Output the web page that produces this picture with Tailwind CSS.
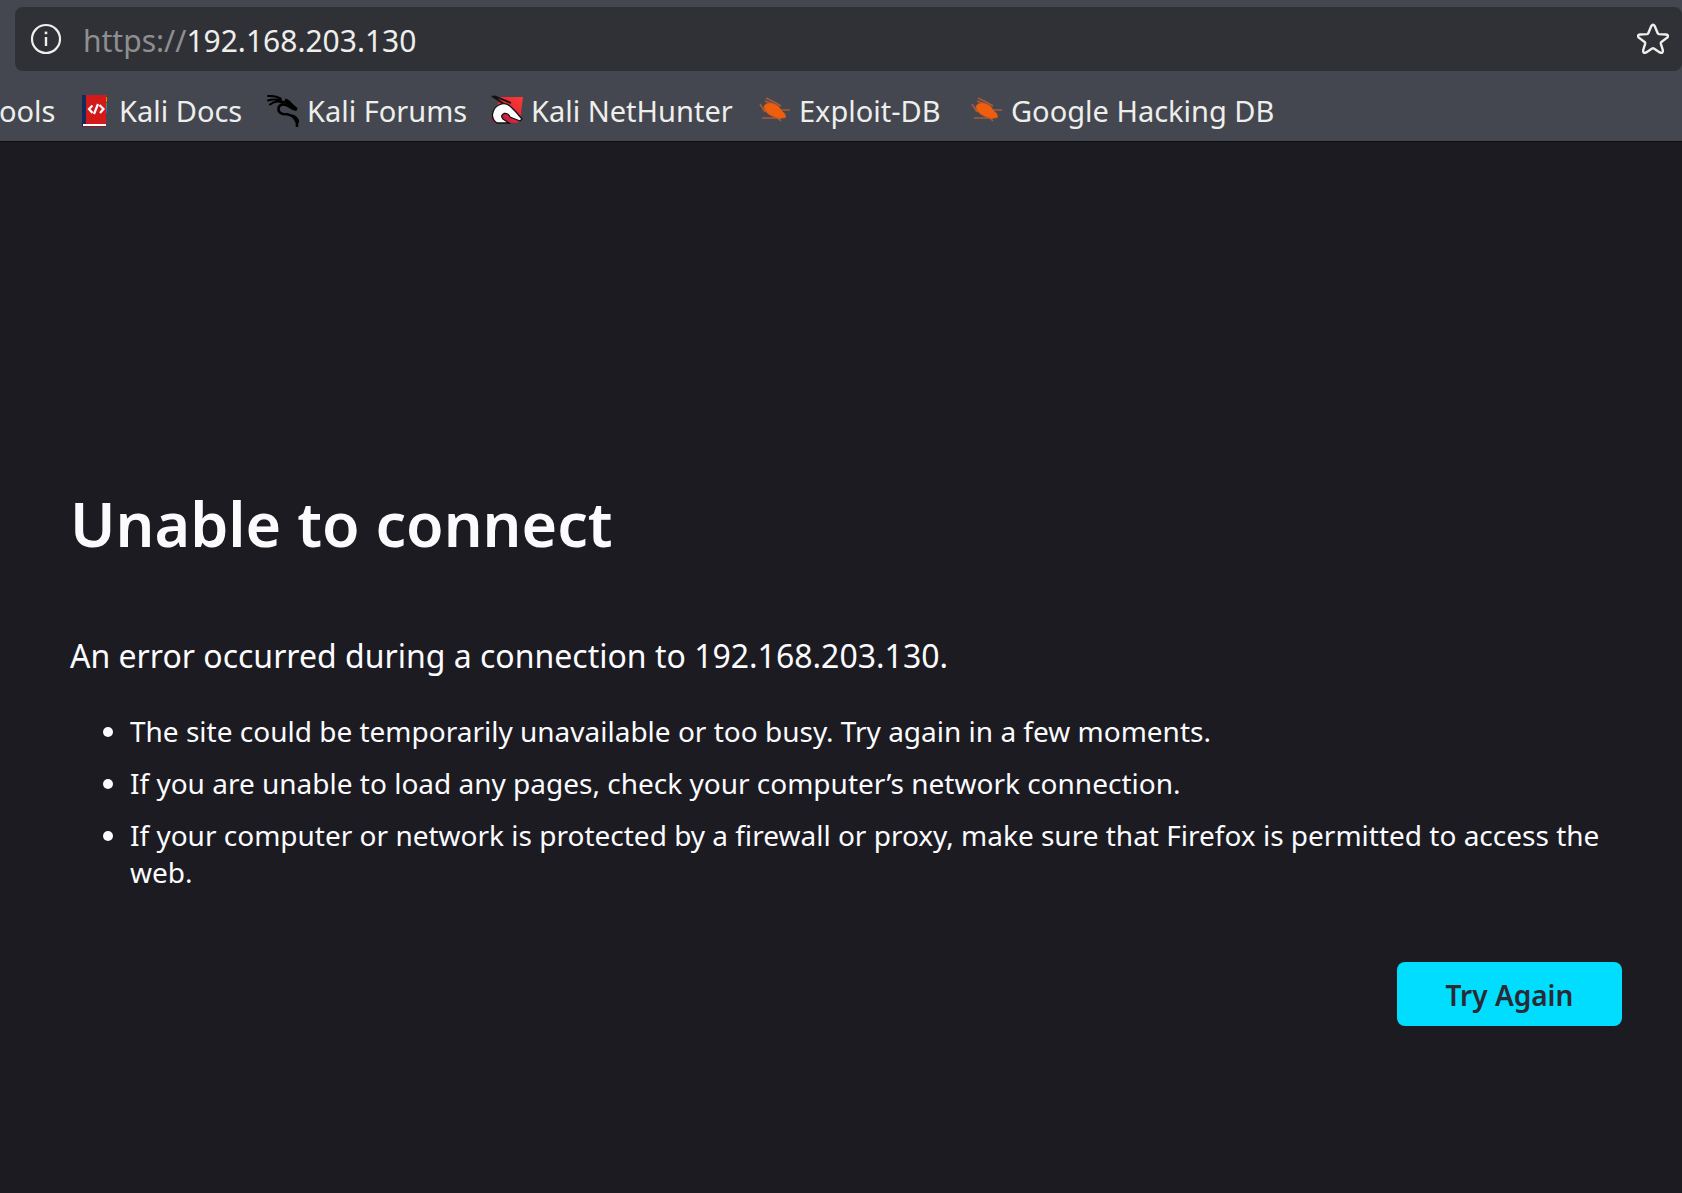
<!DOCTYPE html>
<html lang="en">
<head>
<meta charset="utf-8">
<meta name="viewport" content="width=device-width, initial-scale=1">
<title>Problem loading page</title>
<script src="https://cdn.jsdelivr.net/npm/@tailwindcss/browser@4"></script>
</head>
<body class="min-h-screen bg-[#1c1b22] font-['Noto_Sans',sans-serif] text-[#fbfbfe]">

<header class="border-b border-[#0c0c0d] bg-[#44474f] pt-[7px] text-[#eeeeec]">
  <div class="ml-[15px] flex h-16 items-center rounded-lg bg-[#303136] pr-[13px] pl-[15px]">
    <button type="button" aria-label="Site information" class="shrink-0">
      <svg class="size-8" viewBox="0 0 32 32" fill="none" stroke="currentColor">
        <circle cx="16" cy="16" r="14" stroke-width="2.2"/>
        <path d="M16 14v9" stroke-width="2.4"/>
        <path d="M16 8.6v2.6" stroke-width="2.6"/>
      </svg>
    </button>
    <div class="ml-[21px] flex flex-1 pt-[3px] text-[30px] leading-10">
      <label for="url" class="text-[#8f8f91]">https://</label>
      <input id="url" type="text" value="192.168.203.130" class="min-w-0 flex-1 bg-transparent outline-none">
    </div>
    <button type="button" aria-label="Bookmark this page" class="shrink-0">
      <svg class="size-8" viewBox="0 0 32 32" fill="none" stroke="currentColor" stroke-width="2.4" stroke-linejoin="round">
        <path d="M14.2 3.200Q16 .2 17.8 3.200L20.6 10Q21 11 22 11.1L29 11.500Q32.400 12.200 30.200 14.600L24.400 19Q23.600 19.600 23.800 20.600L25.800 27Q26.200 31 22.800 29.400L16.900 25.500Q16 25 15.100 25.500L9.200 29.400Q5.800 31 6.200 27L8.200 20.600Q8.400 19.600 7.600 19L1.800 14.600Q-.4 12.200 3 11.500L10 11.100Q11 11 11.400 10Z"/>
      </svg>
    </button>
  </div>

  <nav aria-label="Bookmarks" class="flex h-[70px] items-center pt-[11px] pb-[2px] text-[29px] leading-9 whitespace-nowrap">
    <a href="#" class="w-[79px] shrink-0 -indent-px">ools</a>
    <div class="grid grid-cols-[188px_224px_268px_212px_auto]">
      <a href="#" class="flex items-center gap-2">
        <svg class="size-8" viewBox="0 0 32 32" shape-rendering="crispEdges">
          <path d="M24 2h4v5h-4z" fill="#f57900"/><path d="M24 8h4v5h-4z" fill="#2e9e5b"/><path d="M24 13h4v5h-4z" fill="#3465e0"/>
          <path d="M3 0h5v32H3z" fill="#122a5c"/>
          <path d="M7 0h20v29H7z" fill="#d41919"/>
          <path d="M4 29h23v2H4z" fill="#fff"/><path d="M4 31h23v1H4z" fill="#8c1a24"/>
          <path d="M13.500 10.500L10 14l3.500 4M20.500 10l4 4-3.500 4M19 9l-4 10" fill="none" stroke="#fff" stroke-width="2.200" shape-rendering="auto"/>
        </svg>
        Kali Docs
      </a>
      <a href="#" class="flex items-center gap-2">
        <svg class="size-8" viewBox="0 0 32 32" fill="none" stroke="#000" stroke-linecap="round">
          <path d="M1 1Q8 .5 13.500 3.500L14 7M1 5.500Q8 3.500 14 6M3 9.500Q8 5.500 14 7" stroke-width="2"/>
          <path d="M19 5Q22 6 25 10L29 13.500 28.500 14.500Q25.500 14 23 12Q15 7 12 11.500Q10 17.500 16 19Q25 19 28 24Q30.500 28 30 31" stroke-width="2.600"/>
          <path d="M25 20.500Q30 21.500 31.500 27" stroke-width="2"/>
          <path d="M14 7Q19 6 26 12" stroke-width="2.400"/>
        </svg>
        Kali Forums
      </a>
      <a href="#" class="flex items-center gap-2">
        <svg class="size-8" viewBox="0 0 32 32">
          <defs><linearGradient id="nh" x1="1" y1="0" x2="0" y2="1"><stop offset="0" stop-color="#ff3b30"/><stop offset=".6" stop-color="#d8243c"/><stop offset="1" stop-color="#8a1458"/></linearGradient></defs>
          <path d="M9 2h23l-3 24-3 2H2L0 25 5 14z" fill="url(#nh)"/>
          <path d="M1 1L13 9M3 1L20 8" fill="none" stroke="#111" stroke-width="1.800"/>
          <path d="M8 10Q15 6.500 20 12L25 17 31 24 29 26 24 24 19 22Q17 17.500 13 18.500Q9 20.500 12 24L18 28H6Q1 25 1.500 19Q3 12 8 10Z" fill="#fff" stroke="#111" stroke-width="1.300"/>
        </svg>
        Kali NetHunter
      </a>
      <a href="#" class="flex items-center gap-2">
        <svg class="size-8" viewBox="0 0 32 32"><use href="#bug"/></svg>
        Exploit-DB
      </a>
      <a href="#" class="flex items-center gap-2">
        <svg class="size-8" viewBox="0 0 32 32">
          <g id="bug" stroke-linejoin="round">
            <path d="M7 3l8 4 7 4M1 9l5 8M20 15h11M3 23h17M17 21l5 5M6 6l8 3" fill="none" stroke="#a85a38" stroke-width="1.600"/>
            <path d="M5 11Q8 7 14 8.500Q20 10 22 15L26 19 26.500 22.500 20 23.500 12 20.500Q5 17 5 11Z" fill="#ee5e0c" stroke="#cf5a1c" stroke-width=".8"/>
          </g>
        </svg>
        Google Hacking DB
      </a>
    </div>
  </nav>
</header>

<main class="pt-[346px] pr-[60px] pb-16 pl-[70px]">
  <h1 class="text-[61px] leading-[72px] font-semibold">Unable to connect</h1>
  <p class="mt-[74px] text-[32px] leading-11">An error occurred during a connection to 192.168.203.130.</p>
  <ul class="mt-[35px] flex list-disc flex-col gap-[15px] pl-[60px] text-[28px] leading-[37px]">
    <li>The site could be temporarily unavailable or too busy. Try again in a few moments.</li>
    <li>If you are unable to load any pages, check your computer’s network connection.</li>
    <li>If your computer or network is protected by a firewall or proxy, make sure that Firefox is permitted to access the web.</li>
  </ul>
  <div class="mt-[71px] flex justify-end">
    <button type="button" class="h-16 min-w-[225px] rounded-lg bg-[#00ddff] px-10 pt-px text-[28px] leading-9 font-semibold text-[#2b2a33]">Try Again</button>
  </div>
</main>

</body>
</html>
